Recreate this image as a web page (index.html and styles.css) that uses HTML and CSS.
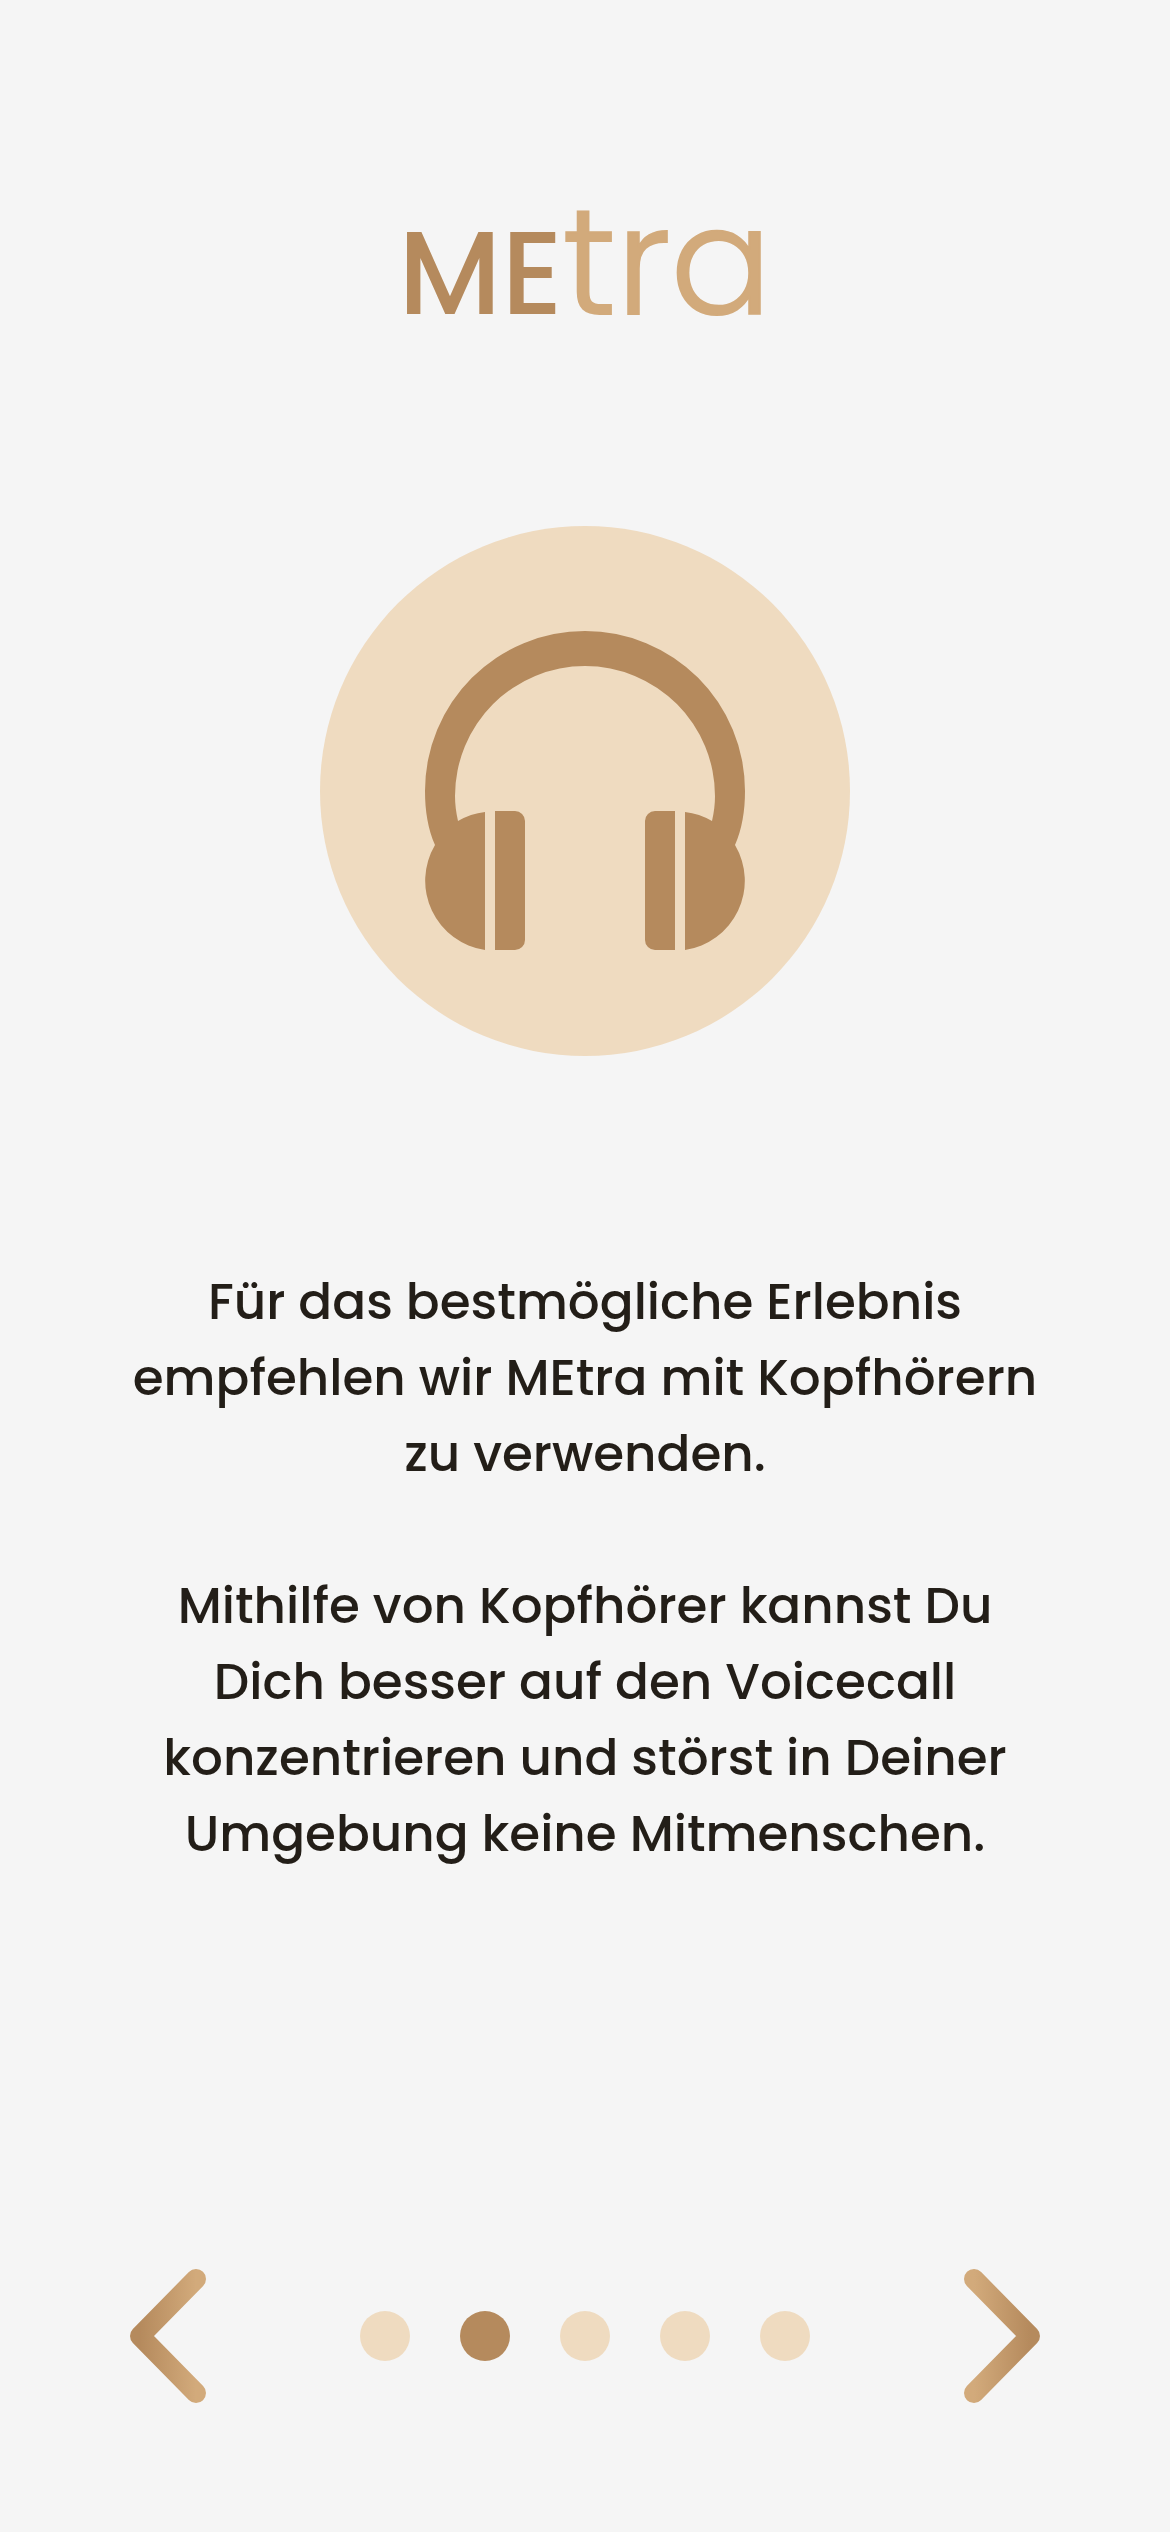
FILE: index.html
```html
<!DOCTYPE html>
<html lang="de">
<head>
<meta charset="utf-8">
<meta name="viewport" content="width=device-width, initial-scale=1">
<title>MEtra</title>
<link rel="stylesheet" href="styles.css">
</head>
<body>
<main class="screen">
  <h1 class="logo"><span class="logo-me">ME</span><span class="logo-tra">tra</span></h1>
  <div class="badge">
    <svg class="headphones" viewBox="0 0 320 320" aria-hidden="true">
      <path d="M10 214C3 198 0 180 0 160A160 160 0 0 1 320 160C320 180 317 198 310 214A70 70 0 0 1 260 319V181A70 70 0 0 1 287 190C289 181 290 173 290 165A130 130 0 0 0 30 165C30 173 31 181 33 190A70 70 0 0 1 60 181V319A70 70 0 0 1 10 214Z"/>
      <path d="M70 180h20a10 10 0 0 1 10 10v119a10 10 0 0 1-10 10H70ZM250 180h-20a10 10 0 0 0-10 10v119a10 10 0 0 0 10 10h20Z"/>
    </svg>
  </div>
  <div class="copy">
    <p>Für das bestmögliche Erlebnis<br>empfehlen wir MEtra mit Kopfhörern<br>zu verwenden.</p>
    <p>Mithilfe von Kopfhörer kannst Du<br>Dich besser auf den Voicecall<br>konzentrieren und störst in Deiner<br>Umgebung keine Mitmenschen.</p>
  </div>
  <nav class="pager" aria-label="Einführung">
    <button class="arrow" type="button" aria-label="Zurück">
      <svg viewBox="0 0 76 134"><defs><linearGradient id="prev" x1="0" y1="0" x2="1" y2="0"><stop offset="0" stop-color="#b58a5d"/><stop offset="1" stop-color="#d2aa7b"/></linearGradient></defs><path d="M66 10 10 67 66 124" stroke="url(#prev)"/></svg>
    </button>
    <div class="dots">
      <button class="dot" type="button" aria-label="Seite 1"></button>
      <button class="dot current" type="button" aria-label="Seite 2" aria-current="step"></button>
      <button class="dot" type="button" aria-label="Seite 3"></button>
      <button class="dot" type="button" aria-label="Seite 4"></button>
      <button class="dot" type="button" aria-label="Seite 5"></button>
    </div>
    <button class="arrow" type="button" aria-label="Weiter">
      <svg viewBox="0 0 76 134"><defs><linearGradient id="next" x1="0" y1="0" x2="1" y2="0"><stop offset="0" stop-color="#d2aa7b"/><stop offset="1" stop-color="#b58a5d"/></linearGradient></defs><path d="M10 10 66 67 10 124" stroke="url(#next)"/></svg>
    </button>
  </nav>
</main>
</body>
</html>
```
FILE: styles.css
```css
* { box-sizing: border-box; }
body { margin: 0; background: #f5f5f5; color: #231e18; font-family: Poppins, Inter, sans-serif; }
.screen { min-height: 100vh; padding: 182px 130px 129px; display: flex; flex-direction: column; align-items: center; }
.logo { margin: 0; height: 160px; display: flex; align-items: baseline; line-height: 160px; }
.logo-me { font-size: 117px; font-weight: 500; color: #b58a5d; }
.logo-tra { font-size: 150px; font-weight: 300; color: #d2aa7b; -webkit-text-stroke: 2px #d2aa7b; }
.badge { margin-top: 184px; width: 530px; height: 530px; border-radius: 50%; background: #efdbc0; display: grid; place-items: center; }
.headphones { width: 320px; height: 320px; fill: #b58a5d; }
.copy { margin-top: 208px; font-size: 50px; font-weight: 500; line-height: 76px; text-align: center; }
.copy p { margin: 0 0 76px; }
.pager { margin-top: auto; width: 100%; display: flex; align-items: center; justify-content: space-between; }
.arrow { width: 76px; height: 134px; padding: 0; border: 0; background: none; cursor: pointer; }
.arrow svg { display: block; width: 100%; height: 100%; fill: none; stroke-width: 20; stroke-linecap: round; stroke-linejoin: round; }
.dots { display: flex; gap: 50px; }
.dot { width: 50px; height: 50px; padding: 0; border: 0; border-radius: 50%; background: #efdbc0; cursor: pointer; }
.current { background: #b58a5d; }
```
